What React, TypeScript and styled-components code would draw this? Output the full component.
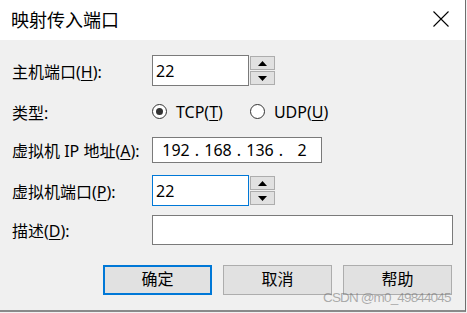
import * as React from 'react';
import { styled, createGlobalStyle } from 'styled-components';

const GlobalStyle = createGlobalStyle`
  html, body {
    margin: 0;
    padding: 0;
    background: #f2f2f2;
  }
  * {
    box-sizing: border-box;
  }
`;

const FONT = `"Noto Sans", "Noto Sans CJK SC", sans-serif`;

const ArrowUp = () => (
  <svg width="9" height="5" viewBox="0 0 9 5">
    <polygon points="0,5 9,5 4.5,0" fill="#000" />
  </svg>
);

const ArrowDown = () => (
  <svg width="9" height="5" viewBox="0 0 9 5">
    <polygon points="0,0 9,0 4.5,5" fill="#000" />
  </svg>
);

const CloseIcon = () => (
  <svg width="16" height="16" viewBox="0 0 16 16">
    <path d="M0.5 0.5 L15.5 15.5 M15.5 0.5 L0.5 15.5" stroke="#000" strokeWidth="1.1" />
  </svg>
);

// spin box: text field plus up/down buttons
const SpinField: React.FC<{ value: string; focused?: boolean }> = ({ value, focused }) => (
  <>
    <TextBox $width={97} $focused={focused}>{value}</TextBox>
    <Spinner>
      <SpinButton><ArrowUp /></SpinButton>
      <SpinButton><ArrowDown /></SpinButton>
    </Spinner>
  </>
);

const Radio: React.FC<{ checked?: boolean; children: React.ReactNode }> = ({ checked, children }) => (
  <RadioOption>
    <RadioCircle>{checked && <RadioDot />}</RadioCircle>
    <span>{children}</span>
  </RadioOption>
);

export default function App() {
  const octets = ['192', '168', '136', '2'];
  return (
    <>
      <GlobalStyle />
      <Window>
        <TitleBar>
          <Title>映射传入端口</Title>
          <CloseBox><CloseIcon /></CloseBox>
        </TitleBar>
        <Body>
          <Row $height={31} $top={0}>
            <Label>主机端口(<U>H</U>):</Label>
            <SpinField value="22" />
          </Row>
          <Row $height={27} $top={12}>
            <Label>类型:</Label>
            <Radio checked>TCP(<U>T</U>)</Radio>
            <Radio>UDP(<U>U</U>)</Radio>
          </Row>
          <Row $height={26} $top={12}>
            <Label>虚拟机 IP 地址(<U>A</U>):</Label>
            <IpBox>
              {octets.map((o, i) => (
                <React.Fragment key={i}>
                  <Octet>{o}</Octet>
                  {i < 3 && <Dot>.</Dot>}
                </React.Fragment>
              ))}
            </IpBox>
          </Row>
          <Row $height={31} $top={12}>
            <Label>虚拟机端口(<U>P</U>):</Label>
            <SpinField value="22" focused />
          </Row>
          <Row $height={30} $top={9}>
            <Label>描述(<U>D</U>):</Label>
            <TextBox $width={301} />
          </Row>
          <ButtonRow>
            <Button $default>确定</Button>
            <Button>取消</Button>
            <Button>帮助</Button>
          </ButtonRow>
        </Body>
        <Watermark>CSDN @m0_49844045</Watermark>
      </Window>
    </>
  );
}

const Window = styled.div`
  position: relative;
  width: 466px;
  height: 312px;
  display: flex;
  flex-direction: column;
  background: #f0f0f0;
  border-right: 1px solid #6e6e6e;
  border-bottom: 2px solid #8a8a8a;
  font-family: ${FONT};
  color: #000;
`;

const TitleBar = styled.div`
  height: 40px;
  flex: none;
  display: flex;
  align-items: center;
  justify-content: space-between;
  background: #fff;
  padding: 0 16px 0 11px;
`;

const Title = styled.div`
  font-size: 18px;
  line-height: 1;
  margin-top: -1px;
`;

const CloseBox = styled.div`
  display: flex;
  width: 16px;
  height: 16px;
  margin-top: -3px;
`;

const Body = styled.div`
  display: flex;
  flex-direction: column;
  padding: 15px 12px 0 12px;
`;

const Row = styled.div<{ $height: number; $top: number }>`
  display: flex;
  align-items: center;
  height: ${(p) => p.$height}px;
  margin-top: ${(p) => p.$top}px;
`;

const Label = styled.div`
  width: 140px;
  flex: none;
  font-size: 16px;
  white-space: nowrap;
`;

const U = styled.span`
  text-decoration: underline;
  text-underline-offset: 2px;
`;

const TextBox = styled.div<{ $width: number; $focused?: boolean }>`
  width: ${(p) => p.$width}px;
  height: 100%;
  background: #fff;
  border: 1px solid ${(p) => (p.$focused ? '#0078d7' : '#7a7a7a')};
  padding-left: 3px;
  font-size: 16px;
  display: flex;
  align-items: center;
`;

const Spinner = styled.div`
  display: flex;
  flex-direction: column;
  justify-content: space-between;
  height: 29px;
  margin-left: 1px;
`;

const SpinButton = styled.div`
  width: 25px;
  height: 14px;
  background: #e1e1e1;
  border: 1px solid #adadad;
  display: flex;
  align-items: center;
  justify-content: center;
`;

const RadioOption = styled.div`
  display: flex;
  align-items: center;
  gap: 9px;
  font-size: 16px;
  margin-right: 27px;
`;

const RadioCircle = styled.div`
  width: 15px;
  height: 15px;
  border-radius: 50%;
  border: 1px solid #333;
  background: #fff;
  display: flex;
  align-items: center;
  justify-content: center;
`;

const RadioDot = styled.div`
  width: 7px;
  height: 7px;
  border-radius: 50%;
  background: #333;
`;

const IpBox = styled.div`
  width: 170px;
  height: 100%;
  background: #fff;
  border: 1px solid #7a7a7a;
  padding-left: 6px;
  display: flex;
  align-items: center;
  font-size: 16px;
`;

const Octet = styled.span`
  width: 34px;
  text-align: center;
`;

const Dot = styled.span`
  width: 8px;
  text-align: center;
`;

const ButtonRow = styled.div`
  display: flex;
  justify-content: flex-end;
  gap: 11px;
  margin-top: 20px;
  padding-right: 1px;
`;

const Button = styled.div<{ $default?: boolean }>`
  width: 109px;
  height: 30px;
  background: #e1e1e1;
  border: ${(p) => (p.$default ? '2px solid #0078d7' : '1px solid #adadad')};
  display: flex;
  align-items: center;
  justify-content: center;
  font-size: 16px;
  line-height: 1;
  padding-bottom: 2px;
`;

const Watermark = styled.div`
  position: absolute;
  left: 323px;
  top: 291px;
  font-family: "Liberation Sans", Arial, sans-serif;
  font-size: 13.5px;
  line-height: 1;
  letter-spacing: -0.85px;
  color: rgba(110, 110, 110, 0.55);
  white-space: nowrap;
  pointer-events: none;
`;
